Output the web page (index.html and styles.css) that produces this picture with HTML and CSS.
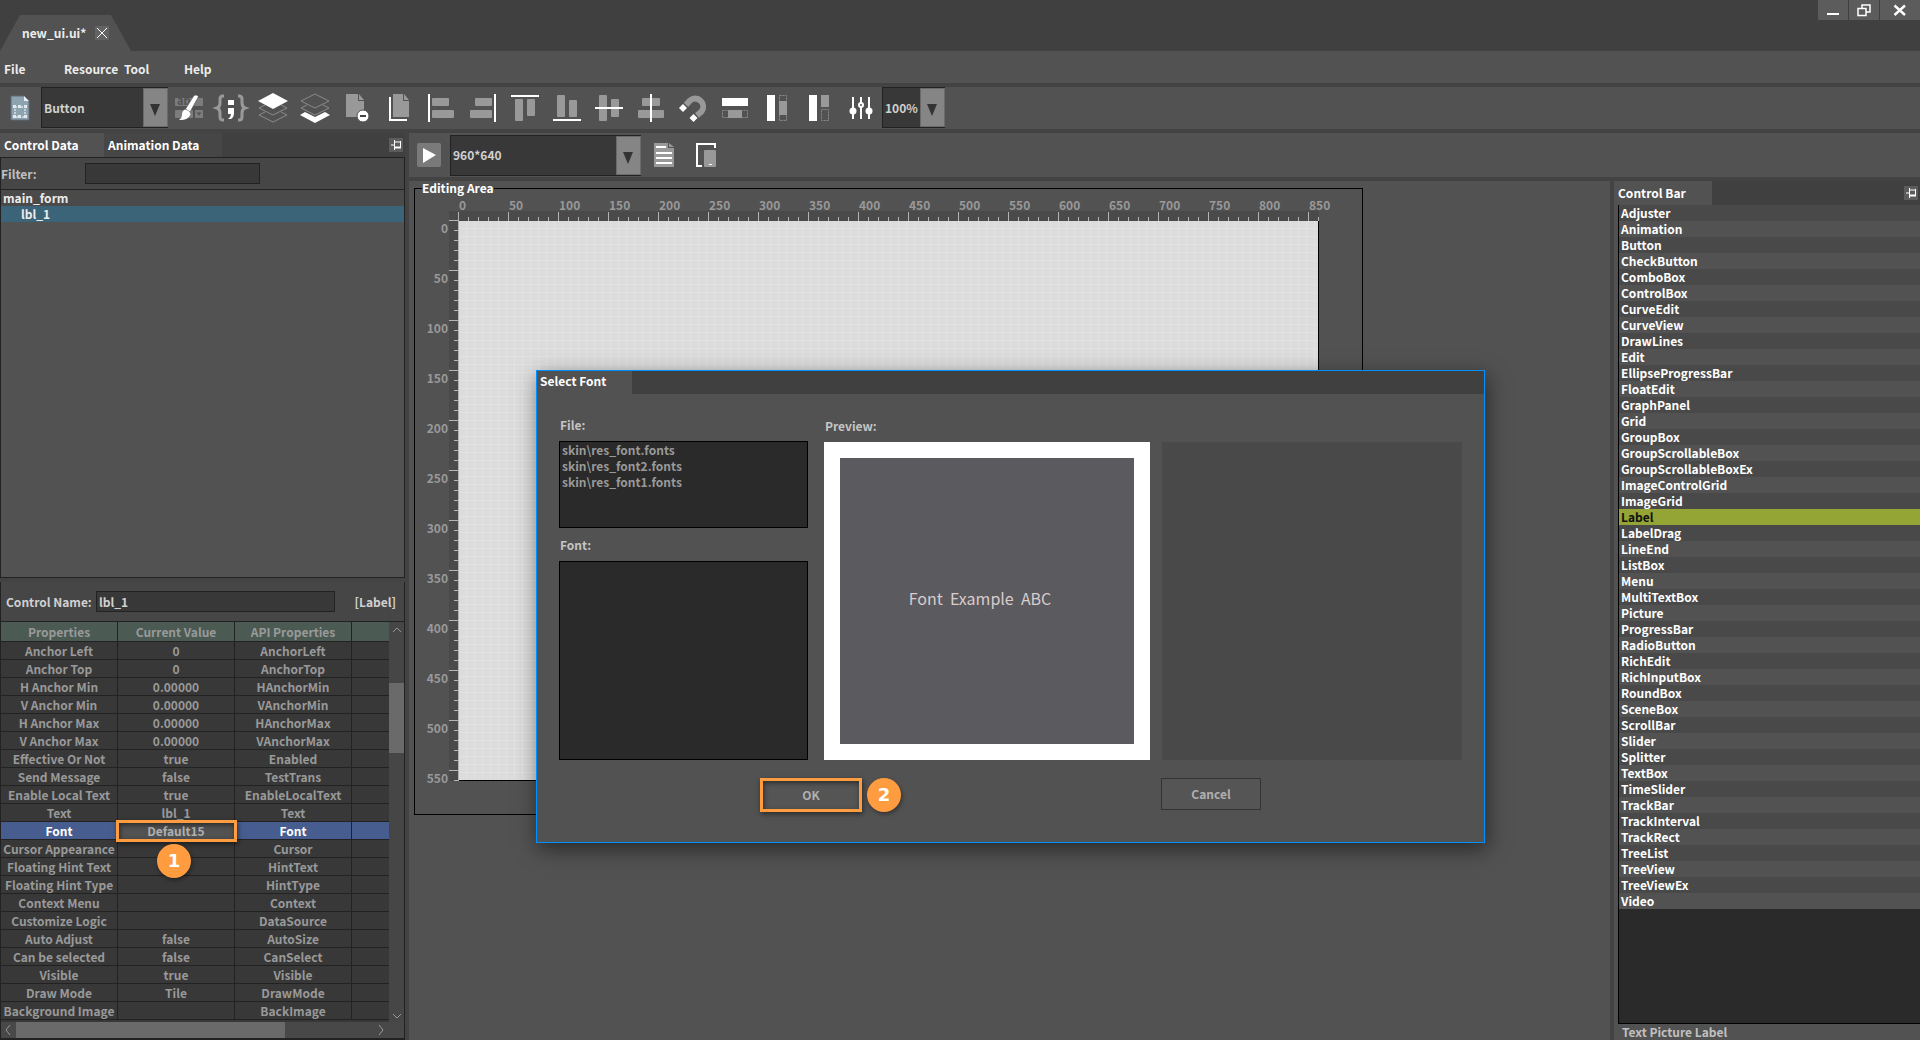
FILE: index.html
```html
<!DOCTYPE html>
<html lang="en">
<head>
    <meta charset="UTF-8">
    <title>new_ui.ui*</title>
    <link rel="stylesheet" href="styles.css">
</head>
<body>
    <header class="titlebar">
        <div class="file-tab">
            <span>new_ui.ui*</span>
            <button class="tab-close" aria-label="Close file">
                <svg width="14" height="14"><path d="M2 2L12 12M12 2L2 12" stroke="#fff" fill="none"/></svg>
            </button>
        </div>
        <div class="win-btns">
            <button aria-label="Minimize"><svg width="30" height="20"><path d="M9 14h12" stroke="#fff" stroke-width="2"/></svg></button>
            <button aria-label="Restore"><svg width="30" height="20"><path d="M13 8V5h8v7h-4" stroke="#fff" stroke-width="1.5" fill="none"/><rect x="9" y="8.500" width="8" height="7" stroke="#fff" stroke-width="1.500" fill="#5c5c5c"/></svg></button>
            <button class="win-close" aria-label="Close"><svg width="40" height="20"><path d="M14.500 5.500L25 15M25 5.500L14.500 15" stroke="#fff" stroke-width="2.400"/></svg></button>
        </div>
    </header>
    <nav class="menu">
        <a href="#">File</a>
        <a href="#">Resource</a>
        <a href="#">Tool</a>
        <a href="#">Help</a>
    </nav>
    <div class="toolbar">
        <button class="new-btn" aria-label="New form">
            <svg width="41" height="42">
                <path d="M11 9h13l5 5v19H11z" fill="#8ea3b0" stroke="#5f6d77"/>
                <path d="M24 9v5h5z" fill="#e8eef2"/>
                <rect x="15" y="20" width="10" height="10" fill="none" stroke="#fff" stroke-dasharray="2 1"/>
                <path d="M13 18h3v3h-3zM18 18h3v3h-3zM24 18h3v3h-3zM13 28h3v3h-3zM18 28h3v3h-3zM24 28h3v3h-3z" fill="#dfe9ef"/>
            </svg>
        </button>
        <div class="combo combo-type">
            <select aria-label="Control type"><option>Button</option></select>
            <span class="arrow"></span>
        </div>
        <div class="tools">
            <button aria-label="Style">
                <svg width="42" height="42">
                    <g fill="#7c7c7c"><rect x="7" y="11" width="28" height="8" rx="1"/><rect x="7" y="23" width="18" height="8" rx="1"/><rect x="27" y="23" width="8" height="8" rx="1"/></g>
                    <text x="9" y="18" class="svg-ab">ab</text>
                    <path d="M28.500 25.500h5l-2.500 3z" fill="#525252"/>
                    <path d="M26 8.500q2.500-1.500 4.500 1L22 25l-4.500-3z" fill="#fff" stroke="#525252" stroke-width=".6"/>
                    <path d="M17 22.500q5 1 5.500 5Q20 33.500 11 33q3-2 3-5 0-4.500 3-5.500z" fill="#fff"/>
                </svg>
            </button>
            <button aria-label="Code">
                <svg width="42" height="42">
                    <path d="M14 9h-1q-3 0-3 3v4q0 4-3 5 3 1 3 5v4q0 3 3 3h1M28 9h1q3 0 3 3v4q0 4 3 5-3 1-3 5v4q0 3-3 3h-1" stroke="#999" stroke-width="3" fill="none"/>
                    <path d="M18 13h6v5h-6zM18 21h6v5q0 4-3 6h-3q3-2 3-5h-3z" fill="#fff"/>
                </svg>
            </button>
            <button aria-label="Bring to front">
                <svg width="42" height="42">
                    <path d="M13 18l-6 3 14 7 14-7-6-3M13 25l-6 3 14 7 14-7-6-3" fill="none" stroke="#8a8a8a"/>
                    <path d="M21 6l15 8-15 8-15-8z" fill="#fff"/>
                </svg>
            </button>
            <button aria-label="Send to back">
                <svg width="42" height="42">
                    <path d="M21 7l14 7-14 7-14-7zM13 18l-6 3 14 7 14-7-6-3" fill="none" stroke="#8a8a8a"/>
                    <path d="M11 25l10 5 10-5 5 3-15 8-15-8z" fill="#fff"/>
                </svg>
            </button>
            <button aria-label="Remove page">
                <svg width="42" height="42">
                    <path d="M10 7h12v7h6v16H10zM23 7l5 6h-5z" fill="#999"/>
                    <circle cx="27" cy="29" r="6" fill="#fff" stroke="#525252"/><path d="M24 29h6" stroke="#444" stroke-width="2"/>
                </svg>
            </button>
            <button aria-label="Copy page">
                <svg width="42" height="42">
                    <path d="M15 7h10v7h6v16H15zM26 7l5 6h-5z" fill="#999"/>
                    <path d="M12 10v23h17" stroke="#fff" stroke-width="2" fill="none"/>
                </svg>
            </button>
            <button aria-label="Align left">
                <svg width="42" height="42"><g fill="#999"><rect x="12" y="11" width="17" height="8" rx="1"/><rect x="12" y="23" width="22" height="8" rx="1"/></g><rect x="8" y="7" width="2" height="28" fill="#fff"/></svg>
            </button>
            <button aria-label="Align right">
                <svg width="42" height="42"><g fill="#999"><rect x="13" y="11" width="17" height="8" rx="1"/><rect x="8" y="23" width="22" height="8" rx="1"/></g><rect x="32" y="7" width="2" height="28" fill="#fff"/></svg>
            </button>
            <button aria-label="Align top">
                <svg width="42" height="42"><g fill="#999"><rect x="11" y="12" width="8" height="22" rx="1"/><rect x="23" y="12" width="8" height="17" rx="1"/></g><rect x="7" y="8" width="28" height="2" fill="#fff"/></svg>
            </button>
            <button aria-label="Align bottom">
                <svg width="42" height="42"><g fill="#999"><rect x="11" y="8" width="8" height="22" rx="1"/><rect x="23" y="13" width="8" height="17" rx="1"/></g><rect x="7" y="32" width="28" height="2" fill="#fff"/></svg>
            </button>
            <button aria-label="Align middle">
                <svg width="42" height="42"><g fill="#999"><rect x="11" y="8" width="8" height="26" rx="1"/><rect x="23" y="12" width="8" height="18" rx="1"/></g><rect x="7" y="20" width="28" height="2" fill="#fff"/></svg>
            </button>
            <button aria-label="Align center">
                <svg width="42" height="42"><g fill="#999"><rect x="12" y="11" width="18" height="8" rx="1"/><rect x="8" y="23" width="26" height="8" rx="1"/></g><rect x="20" y="7" width="2" height="28" fill="#fff"/></svg>
            </button>
            <button aria-label="Snap">
                <svg width="42" height="42">
                    <path d="M14 18l4-4.500a8 8 0 0 1 11.500 11L25 28.500" fill="none" stroke="#999" stroke-width="6"/>
                    <path d="M11 17l4 4-4 4-4-4zM21.500 27l4 4-4 4-4-4z" fill="#fff"/>
                </svg>
            </button>
            <button aria-label="Same width">
                <svg width="42" height="42"><rect x="8" y="11" width="26" height="8" fill="#fff"/><rect x="8.500" y="23.500" width="25" height="7" fill="none" stroke="#8a8a8a" stroke-dasharray="2 1"/><rect x="14" y="23" width="14" height="8" fill="#999"/></svg>
            </button>
            <button aria-label="Same height">
                <svg width="42" height="42"><rect x="11" y="8" width="8" height="26" fill="#fff"/><rect x="23.500" y="8.500" width="7" height="25" fill="none" stroke="#8a8a8a" stroke-dasharray="2 1"/><rect x="23" y="14" width="8" height="14" fill="#999"/></svg>
            </button>
            <button aria-label="Same size">
                <svg width="42" height="42"><rect x="11" y="8" width="8" height="26" fill="#fff"/><rect x="23" y="8" width="8" height="12" fill="#999"/><rect x="23.500" y="22.500" width="7" height="11" fill="none" stroke="#8a8a8a" stroke-dasharray="2 1"/></svg>
            </button>
            <button aria-label="Settings">
                <svg width="42" height="42"><path d="M13 10v22M21 10v22M29 10v22" stroke="#fff" stroke-width="2"/><g fill="#fff"><circle cx="13" cy="24" r="3.500"/><circle cx="29" cy="24" r="3.500"/></g><circle cx="21" cy="18" r="2" fill="#525252" stroke="#fff" stroke-width="2"/></svg>
            </button>
        </div>
        <div class="combo combo-zoom">
            <select aria-label="Zoom"><option>100%</option></select>
            <span class="arrow"></span>
        </div>
    </div>

    <div class="workspace">
        <aside class="left">
            <div class="tabs">
                <button class="tab active">Control Data</button>
                <button class="tab tab-anim">Animation Data</button>
                <button class="pin" aria-label="Pin"><svg width="14" height="14"><path d="M2 7h3M5.500 2v10M5.500 4h6M11.500 3v7" stroke="#fff" fill="none"/><path d="M5.500 9.500h6.500" stroke="#fff" stroke-width="2"/></svg></button>
            </div>
            <div class="tree-box">
                <div class="filter">
                    <label for="filter">Filter:</label>
                    <input id="filter" type="text">
                </div>
                <ul class="tree">
                    <li>main_form</li>
                    <li class="child active">lbl_1</li>
                </ul>
            </div>
            <div class="props">
                <div class="name-row">
                    <label for="cname">Control Name:</label>
                    <input id="cname" type="text" value="lbl_1">
                    <span>[Label]</span>
                </div>
                <div class="table-box">
                    <table>
                        <thead>
                        <tr><th>Properties</th><th>Current Value</th><th>API Properties</th><th></th></tr>
                        </thead>
                        <tbody>
                        <tr><td>Anchor Left</td><td>0</td><td>AnchorLeft</td><td></td></tr>
                        <tr><td>Anchor Top</td><td>0</td><td>AnchorTop</td><td></td></tr>
                        <tr><td>H Anchor Min</td><td>0.00000</td><td>HAnchorMin</td><td></td></tr>
                        <tr><td>V Anchor Min</td><td>0.00000</td><td>VAnchorMin</td><td></td></tr>
                        <tr><td>H Anchor Max</td><td>0.00000</td><td>HAnchorMax</td><td></td></tr>
                        <tr><td>V Anchor Max</td><td>0.00000</td><td>VAnchorMax</td><td></td></tr>
                        <tr><td>Effective Or Not</td><td>true</td><td>Enabled</td><td></td></tr>
                        <tr><td>Send Message</td><td>false</td><td>TestTrans</td><td></td></tr>
                        <tr><td>Enable Local Text</td><td>true</td><td>EnableLocalText</td><td></td></tr>
                        <tr><td>Text</td><td>lbl_1</td><td>Text</td><td></td></tr>
                        <tr class="active"><td>Font</td><td class="value">Default15<div class="mark"></div><b class="step step-1">1</b></td><td>Font</td><td></td></tr>
                        <tr><td>Cursor Appearance</td><td></td><td>Cursor</td><td></td></tr>
                        <tr><td>Floating Hint Text</td><td></td><td>HintText</td><td></td></tr>
                        <tr><td>Floating Hint Type</td><td></td><td>HintType</td><td></td></tr>
                        <tr><td>Context Menu</td><td></td><td>Context</td><td></td></tr>
                        <tr><td>Customize Logic</td><td></td><td>DataSource</td><td></td></tr>
                        <tr><td>Auto Adjust</td><td>false</td><td>AutoSize</td><td></td></tr>
                        <tr><td>Can be selected</td><td>false</td><td>CanSelect</td><td></td></tr>
                        <tr><td>Visible</td><td>true</td><td>Visible</td><td></td></tr>
                        <tr><td>Draw Mode</td><td>Tile</td><td>DrawMode</td><td></td></tr>
                        <tr><td>Background Image</td><td></td><td>BackImage</td><td></td></tr>
                        </tbody>
                    </table>
                    <div class="vscroll">
                        <svg width="15" height="15"><path d="M4 10l4-4 4 4" fill="none" stroke="#999"/></svg>
                        <div class="vthumb"></div>
                        <svg width="15" height="15"><path d="M4 7l4 4 4-4" fill="none" stroke="#999"/></svg>
                    </div>
                </div>
                <div class="hscroll">
                    <svg width="15" height="16"><path d="M9 3L5 8l4 5" fill="none" stroke="#999"/></svg>
                    <div class="hthumb"></div>
                    <svg width="15" height="16"><path d="M5 3l4 5-4 5" fill="none" stroke="#999"/></svg>
                </div>
            </div>
        </aside>

        <div class="main">
            <div class="subbar">
                <button class="play" aria-label="Run"><svg width="24" height="24"><path d="M6 5l13 7-13 8z" fill="#fff"/></svg></button>
                <div class="combo combo-size">
                    <select aria-label="Resolution"><option>960*640</option></select>
                    <span class="arrow"></span>
                </div>
                <button class="sub-icon" aria-label="Document">
                    <svg width="20" height="24"><path d="M0 0h14v5h6v19H0zM15 0l5 4h-5z" fill="#999"/><path d="M2 4h10M2 10h16M2 15h16M2 20h16" stroke="#fff" stroke-width="2"/></svg>
                </button>
                <button class="sub-icon" aria-label="Orientation">
                    <svg width="20" height="24"><rect x="8" y="7" width="12" height="17" rx="1" fill="#999"/><path d="M13 21.500h3" stroke="#fff"/><path d="M6 23H1V1h18v4" stroke="#fff" stroke-width="2" fill="none"/></svg>
                </button>
            </div>
            <div class="row">
                <div class="center">
                    <fieldset class="edit-area">
                        <legend>Editing Area</legend>
                        <div class="ruler-x">
                            <span>0</span><span>50</span><span>100</span><span>150</span><span>200</span><span>250</span><span>300</span><span>350</span><span>400</span><span>450</span><span>500</span><span>550</span><span>600</span><span>650</span><span>700</span><span>750</span><span>800</span><span>850</span>
                        </div>
                        <div class="board">
                            <div class="ruler-y">
                                <span>0</span><span>50</span><span>100</span><span>150</span><span>200</span><span>250</span><span>300</span><span>350</span><span>400</span><span>450</span><span>500</span><span>550</span>
                            </div>
                            <div class="canvas"></div>
                        </div>
                    </fieldset>
                </div>
                <aside class="right">
                    <div class="tabs">
                        <button class="tab active">Control Bar</button>
                        <button class="pin" aria-label="Pin"><svg width="14" height="14"><path d="M2 7h3M5.500 2v10M5.500 4h6M11.500 3v7" stroke="#fff" fill="none"/><path d="M5.500 9.500h6.500" stroke="#fff" stroke-width="2"/></svg></button>
                    </div>
                    <ul class="controls">
                        <li>Adjuster</li>
                        <li>Animation</li>
                        <li>Button</li>
                        <li>CheckButton</li>
                        <li>ComboBox</li>
                        <li>ControlBox</li>
                        <li>CurveEdit</li>
                        <li>CurveView</li>
                        <li>DrawLines</li>
                        <li>Edit</li>
                        <li>EllipseProgressBar</li>
                        <li>FloatEdit</li>
                        <li>GraphPanel</li>
                        <li>Grid</li>
                        <li>GroupBox</li>
                        <li>GroupScrollableBox</li>
                        <li>GroupScrollableBoxEx</li>
                        <li>ImageControlGrid</li>
                        <li>ImageGrid</li>
                        <li class="active">Label</li>
                        <li>LabelDrag</li>
                        <li>LineEnd</li>
                        <li>ListBox</li>
                        <li>Menu</li>
                        <li>MultiTextBox</li>
                        <li>Picture</li>
                        <li>ProgressBar</li>
                        <li>RadioButton</li>
                        <li>RichEdit</li>
                        <li>RichInputBox</li>
                        <li>RoundBox</li>
                        <li>SceneBox</li>
                        <li>ScrollBar</li>
                        <li>Slider</li>
                        <li>Splitter</li>
                        <li>TextBox</li>
                        <li>TimeSlider</li>
                        <li>TrackBar</li>
                        <li>TrackInterval</li>
                        <li>TrackRect</li>
                        <li>TreeList</li>
                        <li>TreeView</li>
                        <li>TreeViewEx</li>
                        <li>Video</li>
                    </ul>
                    <p class="hint">Text Picture Label</p>
                </aside>
            </div>
        </div>
    </div>

    <div class="dialog" role="dialog" aria-label="Select Font">
        <div class="dialog-head"><h2>Select Font</h2></div>
        <div class="dialog-body">
            <div class="col-files">
                <h3>File:</h3>
                <ul class="list list-file">
                    <li>skin\res_font.fonts</li>
                    <li>skin\res_font2.fonts</li>
                    <li>skin\res_font1.fonts</li>
                </ul>
                <h3>Font:</h3>
                <ul class="list list-font"></ul>
            </div>
            <div class="col-preview">
                <h3>Preview:</h3>
                <div class="preview">Font  Example  ABC</div>
            </div>
            <div class="col-side"></div>
        </div>
        <div class="dialog-foot">
            <button class="ok">OK</button>
            <b class="step">2</b>
            <button class="cancel">Cancel</button>
        </div>
    </div>
</body>
</html>
```

FILE: styles.css
```css
* {
    margin: 0;
    padding: 0;
    box-sizing: border-box;
}
body {
    display: flex;
    flex-direction: column;
    height: 100vh;
    overflow: hidden;
    background: #434343;
    color: #ececec;
    font: bold 12px/16px "Noto Sans CJK SC", "Noto Sans", sans-serif;
}
button, input, select {
    font: inherit;
    color: inherit;
    border: 0;
    background: none;
}
svg {
    display: block;
}
ul {
    list-style: none;
}
a {
    color: inherit;
    text-decoration: none;
}

/* title bar */
.titlebar {
    display: flex;
    justify-content: space-between;
    align-items: flex-end;
    height: 51px;
    background: #404040;
}
.file-tab {
    display: flex;
    align-items: center;
    justify-content: space-between;
    width: 131px;
    height: 36px;
    padding: 0 22px;
    background: #525252;
    clip-path: polygon(0 100%, 20px 0, 111px 0, 100% 100%);
}
.tab-close {
    background: #636363;
}
.win-btns {
    display: flex;
    align-self: flex-start;
    gap: 1px;
}
.win-btns button {
    background: #5c5c5c;
}

.menu {
    display: grid;
    grid-template-columns: repeat(4, 60px);
    height: 32px;
    padding: 10px 4px;
    background: #525252;
}

/* toolbars */
.toolbar {
    display: flex;
    flex-shrink: 0;
    height: 42px;
    margin: 4px 0;
    background: #525252;
}
.tools {
    display: flex;
}
.svg-ab {
    fill: #525252;
    font-size: 11px;
}
.combo {
    position: relative;
    color: #d0d0d0;
}
.combo select {
    appearance: none;
    width: 100%;
    height: 41px;
    padding: 0 2px;
    border: 1px solid #222;
    background: #383838;
}
.combo .arrow {
    position: absolute;
    top: 1px;
    right: 0;
    width: 25px;
    height: 39px;
    border: 1px solid #6a6a6a;
    background: #858585;
}
.combo .arrow:after {
    content: '';
    position: absolute;
    top: 15px;
    left: 6px;
    border: 5px solid transparent;
    border-top: 12px solid #333;
    border-bottom: 0;
}
.combo-type {
    width: 127px;
}
.combo-zoom {
    width: 63px;
}
.combo-size {
    width: 191px;
    margin: 0 13px 0 9px;
}
.subbar {
    display: flex;
    align-items: center;
    height: 44px;
    padding-left: 8px;
    background: #525252;
}
.play {
    border-radius: 2px;
    background: #7a7a7a;
}
.sub-icon {
    margin-right: 22px;
}

.workspace {
    display: flex;
    flex: 1;
    gap: 4px;
    min-height: 0;
}
.main {
    display: flex;
    flex: 1;
    flex-direction: column;
    gap: 4px;
    min-width: 0;
}
.row {
    display: flex;
    flex: 1;
    gap: 4px;
    min-height: 0;
}

/* side panels */
.tabs {
    display: flex;
    flex-shrink: 0;
    height: 24px;
    background: #404040;
}
.tab {
    width: 104px;
    padding-left: 4px;
    background: #464646;
    color: #fff;
    text-align: left;
}
.tab.active {
    background: #525252;
}
.tab-anim {
    width: 118px;
}
.right .tab {
    width: 98px;
}
.pin {
    height: 14px;
    margin: 5px 2px 0 auto;
    background: #5c5c5c;
}
.left {
    display: flex;
    flex-direction: column;
    width: 405px;
}
.tree-box {
    display: flex;
    flex: 1;
    flex-direction: column;
    border: 1px solid #222;
    background: #525252;
}
.filter {
    display: flex;
    align-items: center;
    height: 32px;
    border-bottom: 1px solid #222;
    background: #464646;
    color: #c0c0c0;
}
.filter label {
    width: 84px;
}
.filter input {
    width: 175px;
    height: 21px;
    border: 1px solid #222;
    background: #383838;
}
.tree li {
    padding-left: 2px;
    background: #4a4a4a;
}
.tree .child {
    padding-left: 20px;
}
.tree .active {
    background: #3c6478;
}
.props {
    margin-top: 4px;
    border: solid #222;
    border-width: 0 1px 2px;
    background: #464646;
}
.name-row {
    display: flex;
    align-items: center;
    height: 40px;
    padding: 0 8px 0 5px;
    border-bottom: 1px solid #222;
    color: #d0d0d0;
}
.name-row label {
    width: 90px;
}
.name-row input {
    width: 239px;
    height: 21px;
    margin-right: auto;
    padding: 0 2px;
    border: 1px solid #222;
    background: #383838;
}
.table-box {
    display: flex;
    height: 400px;
    background: #383838;
}
table {
    width: 100%;
    height: 398px;
    border-spacing: 0;
    table-layout: fixed;
    color: #999;
}
th, td {
    width: 117px;
    height: 18px;
    border: solid #222;
    border-width: 0 1px 1px 0;
    text-align: center;
    white-space: nowrap;
}
th {
    height: 20px;
    background: #4b5b54;
}
th:last-child, td:last-child {
    width: auto;
    border-right: 0;
}
tr.active td {
    background: #475d8f;
    color: #fff;
}
tr.active .value {
    position: relative;
    background: #525252;
    color: #b0b0b0;
}
.mark {
    position: absolute;
    inset: -2px -3px -3px -2px;
    z-index: 1;
    border: 3px solid #ff9c3f;
    box-shadow: 1px 2px 5px rgba(0, 0, 0, .5), inset 1px 2px 5px rgba(0, 0, 0, .5);
}
.step {
    width: 34px;
    border-radius: 50%;
    background: #ff9c3f;
    box-shadow: 1px 2px 4px rgba(0, 0, 0, .4);
    color: #fff;
    font: bold 18px/34px "DejaVu Sans", sans-serif;
    text-align: center;
}
.step-1 {
    position: absolute;
    top: 22px;
    left: 39px;
    z-index: 1;
}
.vscroll {
    display: flex;
    flex: 0 0 15px;
    flex-direction: column;
    justify-content: space-between;
    background: #464646;
}
.vthumb {
    height: 70px;
    margin: 46px 0 auto;
    background: #6a6a6a;
}
.hscroll {
    display: flex;
    height: 16px;
    padding-right: 15px;
    background: #484848;
}
.hthumb {
    width: 269px;
    margin-right: auto;
    background: #6a6a6a;
}

/* editing area */
.center {
    display: flex;
    flex: 1;
    min-width: 0;
    background: #525252;
}
.edit-area {
    display: flex;
    flex: 1;
    flex-direction: column;
    min-width: 0;
    margin: 0 247px 225px 5px;
    padding: 0 43px 33px 34px;
    border: 1px solid #000;
    color: #999;
}
.edit-area legend {
    margin-left: -27px;
    line-height: 14px;
    color: #fff;
}
.ruler-x {
    display: flex;
    height: 26px;
    padding-left: 10px;
    background:
        repeating-linear-gradient(90deg, #b4b4b4 0 1px, transparent 1px 50px) 9px 100% / 100% 9px no-repeat,
        repeating-linear-gradient(90deg, #b4b4b4 0 1px, transparent 1px 10px) 9px 100% / 100% 4px no-repeat,
        linear-gradient(#4a4a4a, #4a4a4a) 0 100% / 100% 10px no-repeat;
}
.ruler-x span {
    flex: 0 0 50px;
    line-height: 20px;
}
.board {
    display: flex;
    flex: 1;
    min-height: 0;
}
.ruler-y {
    display: flex;
    flex-direction: column;
    width: 44px;
    margin: -1px 0 0 -34px;
    padding-right: 10px;
    border-right: 1px solid #b4b4b4;
    background:
        repeating-linear-gradient(#b4b4b4 0 1px, transparent 1px 50px) 100% 0 / 9px 100% no-repeat,
        repeating-linear-gradient(#b4b4b4 0 1px, transparent 1px 10px) 100% 0 / 4px 100% no-repeat,
        linear-gradient(#4a4a4a, #4a4a4a) 100% 0 / 9px 100% no-repeat;
    text-align: right;
}
.ruler-y span {
    flex: 0 0 50px;
}
.canvas {
    flex: 1;
    border: solid #000;
    border-width: 0 1px 1px 0;
    background:
        repeating-linear-gradient(90deg, transparent 0 7px, #e2e2e2 7px 8px),
        repeating-linear-gradient(transparent 0 7px, #e2e2e2 7px 8px),
        #dcdcdc;
}

/* control bar */
.right {
    display: flex;
    flex-direction: column;
    width: 306px;
    background: #525252;
}
.controls {
    flex: 1;
    margin-left: 4px;
    border: solid #000;
    border-width: 0 0 1px 1px;
    background: #2a2a2a;
    color: #fff;
}
.controls li {
    padding-left: 2px;
    background: #525252;
}
.controls li:nth-child(odd) {
    background: #494949;
}
.controls li.active {
    background: #94a536;
    color: #111;
}
.hint {
    padding-left: 8px;
    color: #c0c0c0;
}

/* font dialog */
.dialog {
    position: absolute;
    top: 370px;
    left: 536px;
    z-index: 2;
    width: 949px;
    border: 1px solid #0090ff;
    background: #525252;
    box-shadow: 2px 6px 20px rgba(0, 0, 0, .5);
    color: #c4c4c4;
}
.dialog h2, .dialog h3 {
    font-size: 12px;
}
.dialog-head {
    display: flex;
    background: #404040;
}
.dialog-head h2 {
    width: 95px;
    height: 23px;
    padding: 2px 3px;
    background: #525252;
    color: #fff;
}
.dialog-body {
    display: flex;
    padding: 23px 22px 18px;
}
.dialog-body h3 {
    height: 24px;
    padding-left: 1px;
}
.col-files {
    width: 249px;
    margin-right: 16px;
}
.list {
    border: 1px solid #000;
    background: #2a2a2a;
    color: #999;
}
.list li {
    padding-left: 2px;
}
.list-file {
    height: 87px;
    margin-bottom: 9px;
}
.list-font {
    height: 199px;
}
.col-preview {
    width: 326px;
    margin-top: 1px;
}
.preview {
    height: 318px;
    padding: 128px 64px 0 50px;
    border: 16px solid #fff;
    background: #5b5a5f;
    color: #d8cccc;
    font-size: 16px;
    font-weight: 400;
    line-height: 24px;
    text-align: center;
    white-space: pre;
}
.col-side {
    flex: 1;
    margin: 25px 0 0 12px;
    background: #494949;
}
.dialog-foot {
    display: flex;
    padding: 0 223px 30px;
    color: #b0b0b0;
}
.dialog-foot button {
    width: 100px;
    height: 32px;
    border: 1px solid #333;
    background: #555;
}
.dialog-foot .ok {
    width: 102px;
    height: 34px;
    margin-right: 5px;
    border: 3px solid #ff9c3f;
    box-shadow: 1px 2px 5px rgba(0, 0, 0, .5), inset 1px 2px 5px rgba(0, 0, 0, .5);
}
.dialog-foot .cancel {
    margin-left: auto;
}
```
